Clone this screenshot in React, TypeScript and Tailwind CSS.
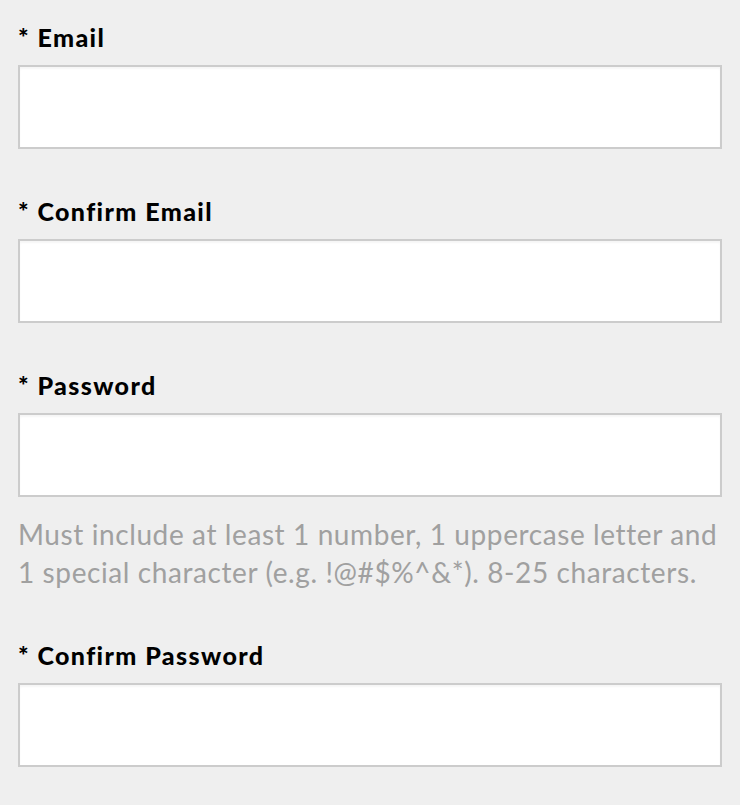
import React from 'react';

type FieldProps = {
  label: string;
  type?: string;
  hint?: string;
};

function Field({ label, type = 'text', hint }: FieldProps) {
  return (
    <div className="flex flex-col">
      <label className="text-[25px] leading-[30px] font-black tracking-[1.4px] text-black mb-[13px]">* {label}</label>
      <input
        type={type}
        className="h-[84px] w-full bg-white border-2 border-[#cccccc] shadow-[inset_0_2px_2px_rgba(0,0,0,0.04)] outline-none px-3"
      />
      {hint && (
        <p className="mt-[18px] mb-[2px] text-[28px] leading-[38px] text-[#a0a0a0] tracking-[0.6px]">{hint}</p>
      )}
    </div>
  );
}

export default function App() {
  return (
    <div
      className="min-h-[805px] w-[740px] bg-[#efefef] pl-[18px] pr-[18px] pt-[22px]"
      style={{ fontFamily: 'Lato, "Noto Sans", sans-serif' }}
    >
      <div className="flex flex-col gap-[47px] w-[704px]">
        <Field label="Email" type="email" />
        <Field label="Confirm Email" type="email" />
        <Field
          label="Password"
          type="password"
          hint="Must include at least 1 number, 1 uppercase letter and 1 special character (e.g. !@#$%^&*). 8-25 characters."
        />
        <Field label="Confirm Password" type="password" />
      </div>
    </div>
  );
}
